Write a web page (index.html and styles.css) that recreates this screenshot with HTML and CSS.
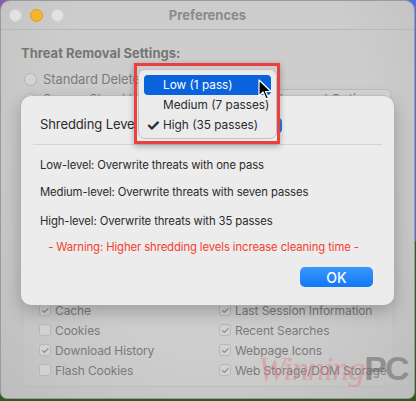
FILE: index.html
```html
<!DOCTYPE html>
<html lang="en">
<head>
  <meta charset="UTF-8" />
  <title>Preferences</title>
  <link rel="stylesheet" href="styles.css">
</head>
<body>
  <div class="window">
    <div class="title-bar">
      <div class="lights">
        <span class="light"></span>
        <span class="light light-min"></span>
        <span class="light"></span>
      </div>
      <div class="title">Preferences</div>
    </div>

    <main class="content">
      <h1>Threat Removal Settings:</h1>
      <div class="radio-row"><span class="radio"></span>Standard Delete</div>
      <div class="radio-row">
        <span class="radio"></span>Secure Shred Using Level
        <span class="adv-btn">Advanced Options</span>
      </div>

      <div class="group">
        <div class="checks">
          <div class="check"><span class="box on">✓</span>Cache</div>
          <div class="check"><span class="box on">✓</span>Last Session Information</div>
          <div class="check"><span class="box"></span>Cookies</div>
          <div class="check"><span class="box on">✓</span>Recent Searches</div>
          <div class="check"><span class="box on">✓</span>Download History</div>
          <div class="check"><span class="box on">✓</span>Webpage Icons</div>
          <div class="check"><span class="box"></span>Flash Cookies</div>
          <div class="check"><span class="box on">✓</span>Web Storage/DOM Storage</div>
        </div>
      </div>
    </main>

    <!-- modal sheet over the dimmed window -->
    <div class="sheet">
      <div class="sheet-head">
        <span>Shredding Level</span>
        <span class="popup-btn"></span>
      </div>
      <div class="sheet-body">
        <p>Low-level: Overwrite threats with one pass</p>
        <p>Medium-level: Overwrite threats with seven passes</p>
        <p>High-level: Overwrite threats with 35 passes</p>
        <p class="warning">- Warning: Higher shredding levels increase cleaning time -</p>
        <div class="sheet-actions">
          <button class="ok-btn">OK</button>
        </div>
      </div>
    </div>

    <div class="highlight">
      <ul class="menu">
        <li class="selected">Low (1 pass)</li>
        <li>Medium (7 passes)</li>
        <li><span class="tick">✓</span>High (35 passes)</li>
      </ul>
    </div>

    <svg class="cursor" width="14" height="22" viewBox="0 0 14 22">
      <path d="M1 1 L1 17 L5 13 L8 20 L10.5 19 L7.5 12.5 L13 12.5 Z" fill="#000" stroke="#fff" stroke-width="1.2" stroke-linejoin="round"/>
    </svg>

    <div class="watermark"><span class="wm-script">Winning</span><span class="wm-pc">PC</span></div>
  </div>
</body>
</html>
```

FILE: styles.css
```css
body {
  margin: 0;
  width: 416px;
  height: 401px;
  overflow: hidden;
  font-family: Inter, "Liberation Sans", sans-serif;
  background:
    linear-gradient(180deg, transparent 60%, #2f5a24 60%),
    linear-gradient(90deg, #8a5cb4, #4d6fe2);
}
.window {
  position: relative;
  width: 415px;
  height: 399px;
  box-sizing: border-box;
  border-radius: 10px 10px 7px 7px;
  border: 1px solid #9a9a9a;
  background: radial-gradient(ellipse at 50% 35%, #cdcdcd 55%, #bdbdbd 100%);
  overflow: hidden;
  white-space: nowrap;
}
.title-bar {
  position: relative;
  height: 28px;
  border-bottom: 1px solid #b8b8b8;
  display: flex;
  align-items: center;
  justify-content: center;
}
.lights {
  position: absolute;
  left: 8px;
  top: 8px;
  display: flex;
  gap: 8px;
}
.light {
  width: 11px;
  height: 11px;
  border-radius: 50%;
  background: #e2e2e2;
  border: 0.5px solid #d2d2d2;
}
.light-min {
  background: #f6b62a;
  border-color: #d99d1c;
}
.title {
  font-size: 13px;
  font-weight: bold;
  color: #8a8a8a;
}
.content {
  padding: 0 20px;
  color: #7c7c7c;
  font-size: 11.6px;
  letter-spacing: -0.1px;
}
h1 {
  margin: 15px 0 8px;
  font-size: 13px;
  font-weight: bold;
  letter-spacing: 0;
  color: #767676;
}
.radio-row {
  display: flex;
  align-items: center;
  height: 20px;
  gap: 6px;
  padding-left: 3px;
  font-size: 13px;
}
.radio {
  width: 13px;
  height: 13px;
  border-radius: 50%;
  border: 1px solid #b5b5b5;
  background: #d4d4d4;
  box-sizing: border-box;
}
.adv-btn {
  margin-left: auto;
  margin-right: 3px;
  padding: 1px 12px;
  border-radius: 5px;
  background: #d6d6d6;
  border: 1px solid #bcbcbc;
}
.group {
  margin: 8px 0 0 1px;
  height: 270px;
  box-sizing: border-box;
  border: 1px solid #bdbdbd;
  border-radius: 6px;
  background: rgba(255, 255, 255, 0.04);
  display: flex;
  align-items: flex-end;
  padding: 0 0 8px 16px;
}
.checks {
  display: grid;
  grid-template-columns: 180px auto;
  row-gap: 4px;
}
.check {
  display: flex;
  align-items: center;
  gap: 4px;
  height: 16px;
  font-size: 12px;
  color: #7a7a7a;
}
.box {
  width: 12px;
  height: 12px;
  box-sizing: border-box;
  border: 1px solid #b8b8b8;
  border-radius: 3px;
  background: #d2d2d2;
  font-size: 10px;
  line-height: 11px;
  text-align: center;
  color: #777;
}
.sheet {
  position: absolute;
  left: 20px;
  top: 95px;
  width: 373px;
  height: 209px;
  box-sizing: border-box;
  border-radius: 10px;
  background: #ececec;
  box-shadow: 0 0 0 0.5px #b0b0b0, 0 6px 18px rgba(0, 0, 0, 0.25);
  padding: 0 12px;
  color: #2b2b2b;
  font-size: 11.3px;
  letter-spacing: -0.1px;
}
.sheet-head {
  position: relative;
  height: 49px;
  display: flex;
  align-items: center;
  padding: 8px 0 0 7px;
  box-sizing: border-box;
  border-bottom: 1px solid #d4d4d4;
  font-size: 13px;
}
.popup-btn {
  position: absolute;
  left: 232px;
  top: 22px;
  width: 17px;
  height: 15px;
  border-radius: 4px;
  background: #1f7cf4;
}
.sheet-body {
  padding: 0 7px;
}
.sheet-body p {
  margin: 11px 0 0;
  height: 16px;
  line-height: 16px;
}
.sheet-body p:first-child {
  margin-top: 12px;
}
.sheet-body p:nth-child(3) {
  margin-top: 13px;
}
.sheet-body p.warning {
  margin-top: 10px;
  color: #f5402e;
  text-align: center;
  padding-right: 8px;
}
.sheet-actions {
  display: flex;
  justify-content: flex-end;
  margin-top: 12px;
  padding-right: 2px;
}
.ok-btn {
  width: 73px;
  height: 20px;
  border: none;
  border-radius: 5px;
  background: linear-gradient(#3c97fb, #1078f6);
  color: white;
  font-family: inherit;
  font-size: 14px;
  font-weight: 500;
  padding: 0;
}
.highlight {
  position: absolute;
  left: 133px;
  top: 62px;
  width: 146px;
  height: 81px;
  box-sizing: border-box;
  border: 3px solid #ec4040;
  padding: 3px 0 1px 1px;
  box-shadow: 0 2px 6px rgba(0, 0, 0, 0.3);
}
.menu {
  list-style: none;
  margin: 0;
  padding: 5px 5px;
  height: 70px;
  box-sizing: border-box;
  background: #ebebeb;
  border: 1px solid #c2c2c2;
  border-radius: 7px;
  font-size: 11.8px;
  color: #2a2a2a;
}
.menu li {
  position: relative;
  height: 20px;
  line-height: 20px;
  padding-left: 19px;
  border-radius: 4px;
}
.menu li.selected {
  background: #0a63dc;
  color: white;
}
.tick {
  position: absolute;
  left: 2px;
  font-size: 16px;
  font-weight: bold;
}
.cursor {
  position: absolute;
  left: 257px;
  top: 78px;
}
.watermark {
  position: absolute;
  left: 257px;
  top: 348px;
  display: flex;
  align-items: baseline;
}
.wm-script {
  font-family: "Liberation Serif", serif;
  font-style: italic;
  font-size: 34px;
  letter-spacing: -1px;
  color: rgba(226, 120, 130, 0.45);
}
.wm-pc {
  font-family: "Liberation Sans", sans-serif;
  font-weight: bold;
  font-size: 34px;
  letter-spacing: -2px;
  color: rgba(110, 110, 110, 0.6);
}
```
